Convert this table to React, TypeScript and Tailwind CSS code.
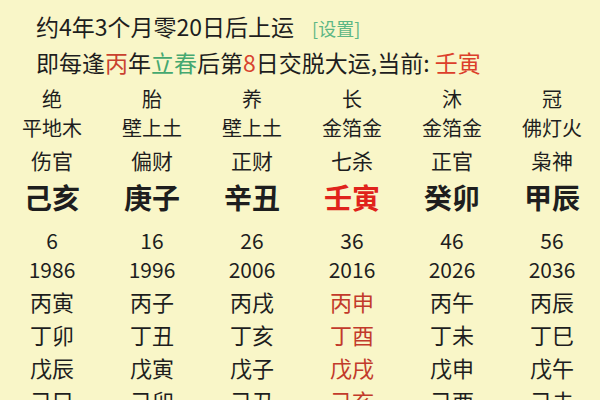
import React from "react";

const cols: string[][] = [
  ["绝", "平地木", "伤官", "己亥", "6", "1986", "丙寅", "丁卯", "戊辰", "己巳"],
  ["胎", "壁上土", "偏财", "庚子", "16", "1996", "丙子", "丁丑", "戊寅", "己卯"],
  ["养", "壁上土", "正财", "辛丑", "26", "2006", "丙戌", "丁亥", "戊子", "己丑"],
  ["长", "金箔金", "七杀", "壬寅", "36", "2016", "丙申", "丁酉", "戊戌", "己亥"],
  ["沐", "金箔金", "正官", "癸卯", "46", "2026", "丙午", "丁未", "戊申", "己酉"],
  ["冠", "佛灯火", "枭神", "甲辰", "56", "2036", "丙辰", "丁巳", "戊午", "己未"],
];

const rowStyles = [
  "mt-[6px] text-[20px] leading-[28px]",
  "mt-[1px] text-[20px] leading-[28px]",
  "mt-[4px] text-[21px] leading-[28px]",
  "mt-[9px] text-[28px] leading-[28px] font-bold",
  "mt-[15px] text-[21px] leading-[28px]",
  "mt-[1px] text-[21px] leading-[28px]",
  "mt-[4px] text-[22px] leading-[28px]",
  "mt-[5px] text-[22px] leading-[28px]",
  "mt-[5px] text-[22px] leading-[28px]",
  "mt-[5px] text-[22px] leading-[28px]",
];

function Row({ idx }: { idx: number }) {
  return (
    <div className={`grid grid-cols-[repeat(6,100px)] ml-[2px] ${rowStyles[idx]}`}>
      {cols.map((c, ci) => {
        let color = "text-[#1e1e1e]";
        if (ci === 3 && idx === 3) color = "text-[#e0231b]";
        else if (ci === 3 && idx >= 6) color = "text-[#c23a2b]";
        return (
          <div key={ci} className={`text-center whitespace-nowrap ${color}`}>
            {c[idx]}
          </div>
        );
      })}
    </div>
  );
}

export default function App() {
  return (
    <div
      className="w-[600px] h-[400px] overflow-hidden bg-[#f9f6c8] text-[#1e1e1e]"
      style={{ fontFamily: '"Noto Sans CJK SC", "Noto Sans", sans-serif' }}
    >
      <div className="pt-[10px] pl-[36px] text-[23px]">
        <div className="whitespace-nowrap leading-[33px]">
          约4年3个月零20日后上运
          <span className="ml-[18px] text-[18px] text-[#5db785]">[设置]</span>
        </div>
        <div className="whitespace-nowrap leading-[34px]">
          即每逢<span className="text-[#c9412f]">丙</span>年
          <span className="text-[#45a870]">立春</span>后第
          <span className="text-[#d8432f]">8</span>日交脱大运,当前:{" "}
          <span className="text-[#dc3f2b]">壬寅</span>
        </div>
      </div>
      {rowStyles.map((_, i) => (
        <Row key={i} idx={i} />
      ))}
    </div>
  );
}
